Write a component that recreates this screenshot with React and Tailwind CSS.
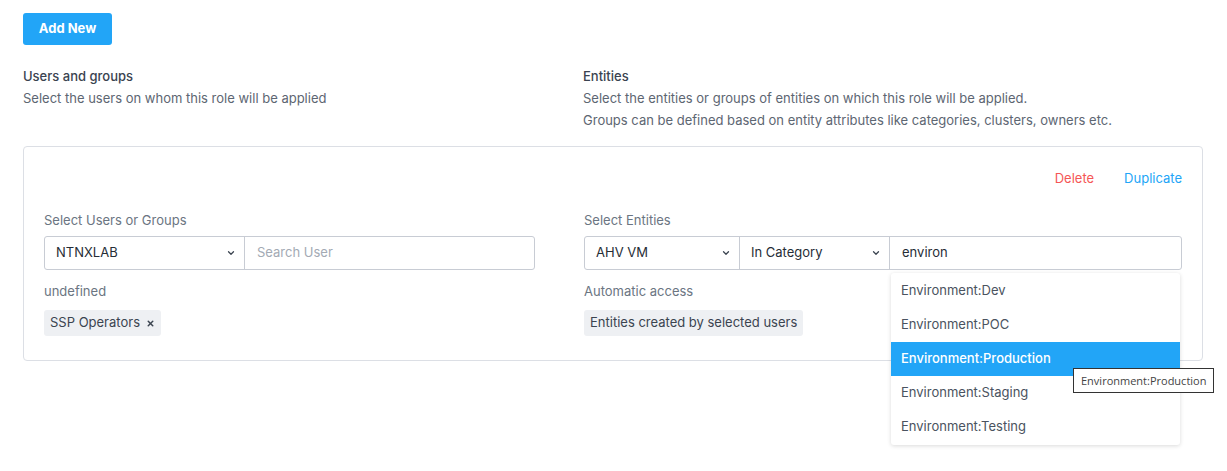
import { ChevronDown, X } from 'lucide-react'

const categories = [
  'Environment:Dev',
  'Environment:POC',
  'Environment:Production',
  'Environment:Staging',
  'Environment:Testing',
]

function SelectBox({ value, className }) {
  return (
    <div className={`flex h-full items-center justify-between pl-[11px] pr-[8px] text-[13px] text-[#262d36] ${className}`}>
      <span>{value}</span>
      <ChevronDown size={10} strokeWidth={3} className="text-[#3b4450]" />
    </div>
  )
}

function Chip({ children }) {
  return (
    <div className="inline-flex h-[26px] items-center gap-[6px] rounded-[3px] bg-[#eef0f3] px-[6px] text-[13px] text-[#3b4450]">
      {children}
    </div>
  )
}

export default function App() {
  return (
    <div className="min-h-[471px] bg-white px-[23px] pt-[13px] font-['Inter',sans-serif] text-[13px]">
      <button className="h-[32px] w-[89px] rounded-[3px] bg-[#22a5f7] text-[13px] font-bold text-white">
        Add New
      </button>

      <div className="mt-[20px] flex">
        <div className="w-[560px]">
          <div className="font-medium leading-[22px] text-[#3a4350]">Users and groups</div>
          <div className="leading-[22px] text-[#5d6672]">Select the users on whom this role will be applied</div>
        </div>
        <div>
          <div className="font-medium leading-[22px] text-[#3a4350]">Entities</div>
          <div className="leading-[22px] text-[#5d6672]">Select the entities or groups of entities on which this role will be applied.</div>
          <div className="leading-[22px] text-[#5d6672]">Groups can be defined based on entity attributes like categories, clusters, owners etc.</div>
        </div>
      </div>

      <div className="mt-[15px] h-[215px] w-[1180px] rounded-[4px] border border-[#dcdfe5] px-[20px] pt-[20px]">
        <div className="flex justify-end gap-[30px] leading-[22px]">
          <span className="text-[#f55656]">Delete</span>
          <span className="text-[#22a5f7]">Duplicate</span>
        </div>

        <div className="mt-[21px] flex gap-[49px]">
          <div className="w-[491px]">
            <div className="leading-[20px] text-[#6b7582]">Select Users or Groups</div>
            <div className="mt-[6px] flex h-[34px] rounded-[3px] border border-[#c8ccd4]">
              <SelectBox value="NTNXLAB" className="w-[200px] border-r border-[#c8ccd4]" />
              <div className="flex flex-1 items-center pl-[12px] text-[13px] text-[#a3aab4]">Search User</div>
            </div>
            <div className="mt-[11px] leading-[20px] text-[#6b7582]">undefined</div>
            <div className="mt-[9px]">
              <Chip>
                SSP Operators
                <X size={9} strokeWidth={4} className="text-[#3b4450]" />
              </Chip>
            </div>
          </div>

          <div className="relative flex-1">
            <div className="leading-[20px] text-[#6b7582]">Select Entities</div>
            <div className="mt-[6px] flex h-[34px] rounded-[3px] border border-[#c8ccd4]">
              <SelectBox value="AHV VM" className="w-[155px] border-r border-[#c8ccd4]" />
              <SelectBox value="In Category" className="w-[150px] border-r border-[#c8ccd4]" />
              <div className="flex flex-1 items-center pl-[12px] text-[13px] text-[#262d36]">environ</div>
            </div>
            <div className="mt-[11px] leading-[20px] text-[#6b7582]">Automatic access</div>
            <div className="mt-[9px]">
              <Chip>Entities created by selected users</Chip>
            </div>

            <div className="absolute left-[307px] top-[63px] w-[289px] rounded-[3px] bg-white py-[1px] shadow-[0_1px_4px_rgba(0,0,0,0.15)]">
              {categories.map((c) => (
                <div
                  key={c}
                  className={`flex h-[34px] items-center px-[10px] text-[13px] ${
                    c === 'Environment:Production' ? 'bg-[#22a5f7] font-medium text-white' : 'text-[#4a5360]'
                  }`}
                >
                  {c}
                </div>
              ))}
            </div>

            <div className="absolute left-[489px] top-[158px] whitespace-nowrap border border-[#333] bg-white px-[7px] py-[3px] font-['Open_Sans',sans-serif] text-[11px] leading-[17px] text-[#444]">
              Environment:Production
            </div>
          </div>
        </div>
      </div>
    </div>
  )
}
